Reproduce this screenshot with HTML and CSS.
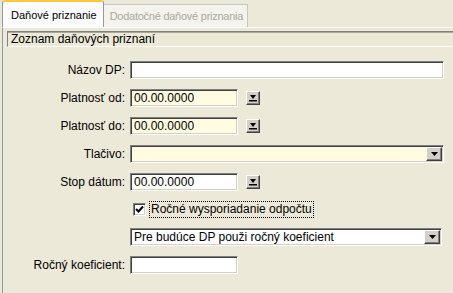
FILE: index.html
```html
<!DOCTYPE html>
<html lang="sk">
<head>
    <meta charset="UTF-8">
    <title>Daňové priznanie</title>
    <link rel="stylesheet" href="styles.css">
</head>
<body>
    <div class="tabs">
        <div class="tab active">Daňové priznanie</div>
        <div class="tab disabled">Dodatočné daňové priznania</div>
    </div>
    <div class="panel">
        <div class="caption">Zoznam daňových priznaní</div>
        <div class="form">
            <label>Názov DP:</label>
            <div class="field wide"></div>

            <label>Platnosť od:</label>
            <div class="date">
                <div class="field short yellow">00.00.0000</div>
                <span class="btn">
                    <svg width="10" height="10" viewBox="0 0 10 10"><path d="M2 2h6L5 6z" fill="#000"/><rect x="1" y="7" width="8" height="1.5" fill="#000"/></svg>
                </span>
            </div>

            <label>Platnosť do:</label>
            <div class="date">
                <div class="field short yellow">00.00.0000</div>
                <span class="btn">
                    <svg width="10" height="10" viewBox="0 0 10 10"><path d="M2 2h6L5 6z" fill="#000"/><rect x="1" y="7" width="8" height="1.5" fill="#000"/></svg>
                </span>
            </div>

            <label>Tlačivo:</label>
            <div class="field wide yellow select">
                <span></span>
                <span class="arrow"><svg width="7" height="4" viewBox="0 0 7 4"><path d="M0 0h7L3.5 4z" fill="#000"/></svg></span>
            </div>

            <label>Stop dátum:</label>
            <div class="date">
                <div class="field short">00.00.0000</div>
                <span class="btn">
                    <svg width="10" height="10" viewBox="0 0 10 10"><path d="M2 2h6L5 6z" fill="#000"/><rect x="1" y="7" width="8" height="1.5" fill="#000"/></svg>
                </span>
            </div>

            <span></span>
            <div class="check">
                <span class="box">
                    <svg width="9" height="9" viewBox="0 0 9 9"><path d="M1 4l2.5 2.5L8 1.5" stroke="#000" stroke-width="2" fill="none"/></svg>
                </span>
                <span class="check-label">Ročné wysporiadanie odpočtu</span>
            </div>

            <span></span>
            <div class="field wide select narrow">
                <span>Pre budúce DP použi ročný koeficient</span>
                <span class="arrow"><svg width="7" height="4" viewBox="0 0 7 4"><path d="M0 0h7L3.5 4z" fill="#000"/></svg></span>
            </div>

            <label>Ročný koeficient:</label>
            <div class="field short"></div>
        </div>
    </div>
</body>
</html>
```

FILE: styles.css
```css
body {
    margin: 0;
    background-color: #ece9d8;
    font-family: "Liberation Sans", Arial, sans-serif;
    font-size: 12px;
    color: #000;
    width: 453px;
    height: 293px;
    overflow: hidden;
}
.tabs {
    display: flex;
    align-items: flex-end;
    padding-left: 2px;
    height: 27px;
}
.tab {
    box-sizing: border-box;
    white-space: nowrap;
    font-size: 11px;
    border: 1px solid #919b9c;
    border-bottom: none;
}
.tab.active {
    height: 27px;
    padding: 7px 6px 0 8px;
    background: #fcfcfe;
    border-top: 2px solid #ffc83c;
    border-radius: 3px 3px 0 0;
}
.tab.disabled {
    height: 23px;
    padding: 5px 4px 0 6px;
    letter-spacing: -0.25px;
    color: #aca899;
    background: #f4f3ee;
    border-color: #c9c7ba;
    border-left: none;
}
.panel {
    border-top: 1px solid #fff;
    border-left: 1px solid #919b9c;
    margin-left: 2px;
    height: 270px;
    padding-top: 3px;
    box-sizing: border-box;
}
.caption {
    margin-left: 4px;
    height: 16px;
    line-height: 15px;
    padding-left: 3px;
    box-sizing: border-box;
    border-top: 1px solid #808080;
    border-left: 1px solid #808080;
    border-bottom: 1px solid #fff;
    box-shadow: inset 0 1px 0 #aca899;
}
.form {
    display: grid;
    grid-template-columns: 122px 1fr;
    column-gap: 5px;
    row-gap: 10px;
    padding-top: 14px;
    padding-right: 9px;
    align-items: center;
}
label {
    text-align: right;
}
.field {
    box-sizing: border-box;
    height: 18px;
    background: #fff;
    border-style: solid;
    border-width: 1px;
    border-color: #808080 #fff #fff #808080;
    box-shadow: inset 1px 1px 0 #404040, inset -1px -1px 0 #d4d0c8;
    padding: 1px 3px;
    line-height: 14px;
}
.field.short {
    width: 108px;
}
.field.yellow {
    background: #fffce1;
}
.date {
    display: flex;
    align-items: center;
    gap: 8px;
}
.btn {
    box-sizing: border-box;
    width: 14px;
    height: 14px;
    display: flex;
    align-items: center;
    justify-content: center;
    background: #d4d0c8;
    border: 1px solid;
    border-color: #fff #404040 #404040 #fff;
    box-shadow: inset -1px -1px 0 #808080;
}
.select {
    display: flex;
    justify-content: space-between;
    align-items: center;
    padding: 1px 1px 1px 3px;
}
.select.narrow {
    margin-right: 2px;
}
.arrow {
    box-sizing: border-box;
    width: 16px;
    height: 14px;
    display: flex;
    align-items: center;
    justify-content: center;
    background: #d4d0c8;
    border: 1px solid;
    border-color: #fff #404040 #404040 #fff;
    box-shadow: inset -1px -1px 0 #808080;
}
.check {
    display: flex;
    align-items: center;
    gap: 4px;
    padding-left: 3px;
    height: 17px;
}
.box {
    box-sizing: border-box;
    width: 13px;
    height: 13px;
    background: #fff;
    border: 1px solid;
    border-color: #808080 #fff #fff #808080;
    box-shadow: inset 1px 1px 0 #404040, inset -1px -1px 0 #d4d0c8;
    display: flex;
    align-items: center;
    justify-content: center;
}
.check-label {
    outline: 1px dotted #000;
    padding: 0 1px;
    line-height: 15px;
}
```
